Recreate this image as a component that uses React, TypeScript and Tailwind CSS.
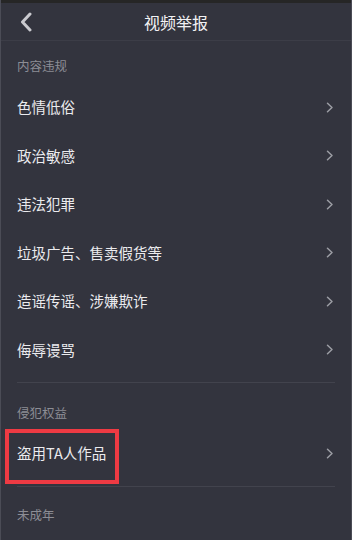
import React from 'react';

const font = { fontFamily: '"Noto Sans CJK SC", "Noto Sans", sans-serif' };

const contentItems = ['色情低俗', '政治敏感', '违法犯罪', '垃圾广告、售卖假货等', '造谣传谣、涉嫌欺诈', '侮辱谩骂'];

function Chevron() {
  return (
    <svg width="8" height="11" viewBox="0 0 8 11" fill="none" className="shrink-0">
      <path d="M1.5 1.2 L6 5.5 L1.5 9.8" stroke="#9c9da4" strokeWidth="1.5" strokeLinecap="round" strokeLinejoin="round" />
    </svg>
  );
}

function Row({ label, marked }: { label: string; marked?: boolean }) {
  return (
    <div className="relative h-[48.5px] flex items-center justify-between pl-4 pr-[17px]">
      <span className="text-[14.5px] text-[#ebebee] leading-none">{label}</span>
      <Chevron />
      {marked && (
        <div className="absolute left-1 top-0 w-[114px] h-[55px] border-4 border-[#ee3a43] pointer-events-none" />
      )}
    </div>
  );
}

function SectionLabel({ label, className }: { label: string; className: string }) {
  return (
    <div className={`flex items-center px-4 ${className}`}>
      <span className="text-[12.5px] text-[#8c8d95] leading-none">{label}</span>
    </div>
  );
}

export default function App() {
  return (
    <div className="w-[352px] h-[540px] overflow-hidden bg-[#33343e] border-x border-[#4b4c56] flex flex-col" style={font}>
      <div className="h-[3px] bg-[#262626] shrink-0" />
      <div className="relative h-[38px] flex items-center justify-center border-b border-[#3c3d47] shrink-0">
        <svg width="14" height="20" viewBox="0 0 14 20" fill="none" className="absolute left-[18px] top-[9px]">
          <path d="M11 2 L3.5 10 L11 18" stroke="#cacacf" strokeWidth="3" strokeLinecap="round" strokeLinejoin="round" />
        </svg>
        <span className="text-[16px] text-[#f2f2f4] leading-none">视频举报</span>
      </div>

      <SectionLabel label="内容违规" className="h-[42px] pt-[8px]" />
      {contentItems.map((item) => (
        <Row key={item} label={item} />
      ))}
      <div className="h-2 shrink-0" />
      <div className="mx-4 h-px bg-[#42434d] shrink-0" />

      <SectionLabel label="侵犯权益" className="h-[46px] pt-[14px]" />
      <Row label="盗用TA人作品" marked />
      <div className="h-2 shrink-0" />
      <div className="mx-4 h-px bg-[#42434d] shrink-0" />

      <SectionLabel label="未成年" className="h-[46px] pt-[12px]" />
    </div>
  );
}
